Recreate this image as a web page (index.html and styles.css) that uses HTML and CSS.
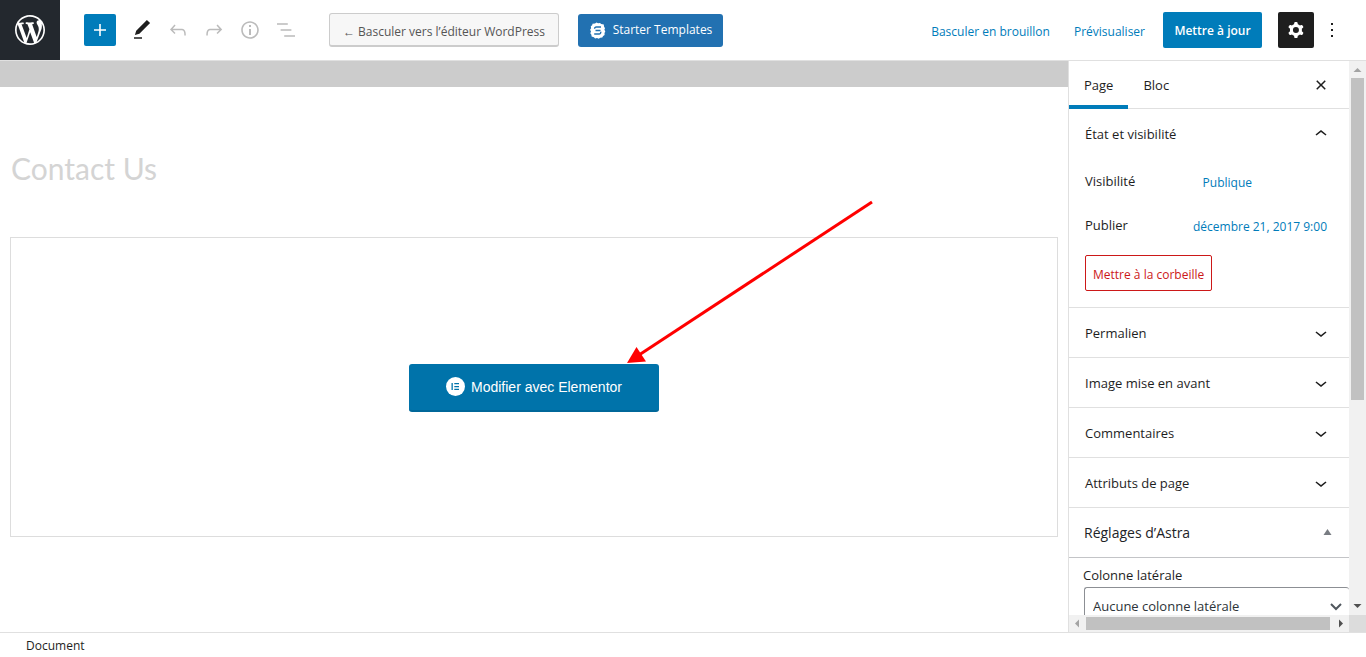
FILE: index.html
```html
<!DOCTYPE html>
<html lang="fr">
<head>
<meta charset="utf-8">
<meta name="viewport" content="width=device-width, initial-scale=1">
<title>Modifier la page</title>
<link rel="stylesheet" href="styles.css">
</head>
<body>
<div class="editor">
  <header class="topbar">
    <a class="logo" href="#" aria-label="WordPress">
      <svg width="36" height="36" viewBox="-2 -2 24 24"><path d="M20 10c0-5.51-4.49-10-10-10C4.48 0 0 4.49 0 10c0 5.52 4.48 10 10 10 5.51 0 10-4.48 10-10zM7.78 15.37L4.37 6.22c.55-.02 1.17-.08 1.17-.08.5-.06.44-1.13-.06-1.11 0 0-1.45.11-2.37.11-.18 0-.37 0-.58-.01C4.12 2.69 6.87 1.11 10 1.11c2.33 0 4.45.87 6.05 2.34-.68-.11-1.65.39-1.65 1.58 0 .74.45 1.36.9 2.1.35.61.55 1.36.55 2.46 0 1.49-1.4 5-1.4 5l-3.03-8.37c.54-.02.82-.17.82-.17.5-.05.44-1.25-.06-1.22 0 0-1.44.12-2.38.12-.87 0-2.33-.12-2.33-.12-.5-.03-.56 1.2-.06 1.22l.92.08 1.26 3.41zM17.41 10c.24-.64.74-1.87.43-4.25.7 1.29 1.05 2.71 1.05 4.25 0 3.29-1.73 6.24-4.4 7.78.97-2.59 1.94-5.2 2.92-7.78zM6.1 18.09C3.12 16.65 1.11 13.53 1.11 10c0-1.3.23-2.48.72-3.59C3.25 10.3 4.67 14.2 6.1 18.09zm4.03-6.63l2.58 6.98c-.86.29-1.76.45-2.71.45-.79 0-1.57-.11-2.29-.33.81-2.38 1.62-4.74 2.42-7.1z"/></svg>
    </a>
    <div class="tools">
      <button class="tool tool-add" aria-label="Ajouter un bloc"><svg width="24" height="24" viewBox="0 0 24 24"><path d="M18 11.2h-5.2V6h-1.6v5.2H6v1.6h5.2V18h1.6v-5.2H18z"/></svg></button>
      <button class="tool" aria-label="Outils"><svg width="24" height="24" viewBox="0 0 24 24"><path d="M20.1 5.1L16.9 2 6.2 12.7l-1.3 4.4 4.5-1.3L20.1 5.1zM4 20.8h8v-1.5H4v1.5z"/></svg></button>
      <button class="tool tool-off" aria-label="Annuler"><svg width="24" height="24" viewBox="0 0 24 24"><path d="M18.3 11.7c-.6-.6-1.4-.9-2.3-.9H6.7l2.9-3.3-1.1-1-4.5 5L8.5 16l1-1-2.7-2.7H16c.5 0 .9.2 1.3.5 1 1 1 3.4 1 4.5v.3h1.5v-.2c0-1.5 0-4.3-1.5-5.7z"/></svg></button>
      <button class="tool tool-off" aria-label="Rétablir"><svg width="24" height="24" viewBox="0 0 24 24"><path d="M15.6 6.5l-1.1 1 2.9 3.3H8c-.9 0-1.7.3-2.3.9-1.4 1.5-1.4 4.2-1.4 5.6v.2h1.5v-.3c0-1.1 0-3.5 1-4.5.3-.3.7-.5 1.3-.5h9.2L14.5 15l1.1 1.1 4.6-4.6-4.6-5z"/></svg></button>
      <button class="tool tool-off" aria-label="Détails"><svg width="24" height="24" viewBox="0 0 24 24"><path d="M12 3.2c-4.8 0-8.8 3.9-8.8 8.8 0 4.8 3.9 8.8 8.8 8.8 4.8 0 8.8-3.9 8.8-8.8 0-4.8-4-8.8-8.8-8.8zm0 16c-4 0-7.2-3.3-7.2-7.2C4.8 8 8 4.8 12 4.8s7.2 3.3 7.2 7.2c0 4-3.2 7.2-7.2 7.2zM11 17h2v-6h-2v6zm0-8h2V7h-2v2z"/></svg></button>
      <button class="tool tool-off" aria-label="Vue en liste"><svg width="24" height="24" viewBox="0 0 24 24"><path d="M13.8 5.2H3v1.5h10.8V5.2zm-3.6 12v1.5H21v-1.5H10.2zm7.2-6H6.6v1.5h10.8v-1.5z"/></svg></button>
    </div>
    <button class="btn-switch">← Basculer vers l’éditeur WordPress</button>
    <button class="btn-starter">
      <svg width="17" height="17" viewBox="0 0 17 17"><path class="badge" d="M3.500 1.800 6 1.500 7.500.5l1.600.8 1.900-.2 1.200 1 2.600.4.200 2 1 1.700-.6 1.600.9 1.700-.8 1.600.1 1.900-1.500 1-.8 1.600-2 .2-1.600 1-1.700-.7-1.900.3-1.200-1.200-2.300-.6-.2-1.900-1.100-1.500.7-1.700-.9-1.700 1-1.500-.3-2 1.400-1z"/><path class="mark" d="M12 5H7.300a1.700 1.700 0 0 0-1.700 1.800M6.500 8.500h5M11.700 9.800A1.700 1.700 0 0 1 10 12H5.200"/></svg>
      Starter Templates
    </button>
    <div class="actions">
      <button class="link-btn">Basculer en brouillon</button>
      <button class="link-btn">Prévisualiser</button>
      <button class="btn-update">Mettre à jour</button>
      <button class="btn-settings" aria-label="Réglages"><svg width="24" height="24" viewBox="0 0 24 24"><path fill-rule="evenodd" d="M10.289 4.836A1 1 0 0111.275 4h1.306a1 1 0 01.987.836l.244 1.466c.787.26 1.503.679 2.108 1.218l1.393-.522a1 1 0 011.216.437l.653 1.13a1 1 0 01-.23 1.273l-1.148.944a6.025 6.025 0 010 2.435l1.149.946a1 1 0 01.23 1.272l-.653 1.13a1 1 0 01-1.216.437l-1.394-.522c-.605.54-1.32.958-2.108 1.218l-.244 1.466a1 1 0 01-.987.836h-1.306a1 1 0 01-.986-.836l-.244-1.466a5.995 5.995 0 01-2.108-1.218l-1.394.522a1 1 0 01-1.217-.436l-.653-1.131a1 1 0 01.23-1.272l1.149-.946a6.026 6.026 0 010-2.435l-1.148-.944a1 1 0 01-.23-1.272l.653-1.131a1 1 0 011.217-.437l1.393.522a5.994 5.994 0 012.108-1.218l.244-1.466zM14.929 12a3 3 0 11-6 0 3 3 0 016 0z"/></svg></button>
      <button class="btn-more" aria-label="Options"><svg width="24" height="24" viewBox="0 0 24 24"><path d="M13 19h-2v-2h2v2zm0-6h-2v-2h2v2zm0-6h-2V5h2v2z"/></svg></button>
    </div>
  </header>

  <div class="workspace">
    <main class="canvas">
      <div class="notice-strip"></div>
      <h1 class="page-title">Contact Us</h1>
      <section class="builder">
        <div class="builder-action">
          <button class="btn-elementor">
            <svg width="19" height="19" viewBox="0 0 19 19"><circle cx="9.500" cy="9.500" r="9.500" fill="#fff"/><path fill="#0073aa" d="M5.500 6h1.300v7H5.500zM8.300 6H13v1.300H8.300zM8.300 8.900H13v1.300H8.300zM8.300 11.700H13V13H8.300z"/></svg>
            <span>Modifier avec Elementor</span>
          </button>
          <svg class="pointer" width="248" height="164" viewBox="0 0 248 164" aria-hidden="true"><path d="M245 2 12 155" stroke="#f00" stroke-width="3"/><path d="M0 163 9.500 147 19 161.500z" fill="#f00"/></svg>
        </div>
      </section>
    </main>

    <aside class="sidebar">
      <div class="sidebar-content">
        <nav class="tabs">
          <button class="tab tab-active">Page</button>
          <button class="tab">Bloc</button>
          <button class="tab-close" aria-label="Fermer les réglages"><svg width="24" height="24" viewBox="0 0 24 24"><path d="M12 13.06l3.712 3.713 1.061-1.06L13.061 12l3.712-3.712-1.06-1.06L12 10.938 8.288 7.227l-1.061 1.06L10.939 12l-3.712 3.712 1.060 1.061L12 13.061z"/></svg></button>
        </nav>
        <section class="panel">
          <button class="panel-head">État et visibilité<svg width="24" height="24" viewBox="0 0 24 24"><path d="M6.500 12.400L12 8l5.500 4.400-.9 1.200L12 10l-4.500 3.600-1-1.200z"/></svg></button>
          <div class="panel-body">
            <div class="row"><span class="row-label">Visibilité</span><button class="link-btn">Publique</button></div>
            <div class="row"><span class="row-label">Publier</span><button class="link-btn">décembre 21, 2017 9:00</button></div>
            <button class="btn-trash">Mettre à la corbeille</button>
          </div>
        </section>
        <section class="panel"><button class="panel-head">Permalien<svg width="24" height="24" viewBox="0 0 24 24"><path d="M17.500 11.600L12 16l-5.500-4.400.9-1.200L12 14l4.500-3.600 1 1.200z"/></svg></button></section>
        <section class="panel"><button class="panel-head">Image mise en avant<svg width="24" height="24" viewBox="0 0 24 24"><path d="M17.500 11.600L12 16l-5.500-4.400.9-1.200L12 14l4.500-3.600 1 1.200z"/></svg></button></section>
        <section class="panel"><button class="panel-head">Commentaires<svg width="24" height="24" viewBox="0 0 24 24"><path d="M17.500 11.600L12 16l-5.500-4.400.9-1.200L12 14l4.500-3.600 1 1.200z"/></svg></button></section>
        <section class="panel"><button class="panel-head">Attributs de page<svg width="24" height="24" viewBox="0 0 24 24"><path d="M17.500 11.600L12 16l-5.500-4.400.9-1.200L12 14l4.500-3.600 1 1.200z"/></svg></button></section>
        <section class="panel panel-astra"><button class="panel-head">Réglages d’Astra<svg width="12" height="12" viewBox="0 0 12 12"><path d="M6.500 2l4 6h-8z"/></svg></button></section>
        <div class="astra-body">
          <label class="field-label" for="layout">Colonne latérale</label>
          <div class="select-wrap">
            <select id="layout" class="select"><option>Aucune colonne latérale</option></select>
            <svg width="12" height="8" viewBox="0 0 12 8"><path d="M1 1l5 5 5-5" fill="none" stroke="#50575e" stroke-width="2"/></svg>
          </div>
        </div>
      </div>
      <div class="vbar" aria-hidden="true">
        <svg width="17" height="17" viewBox="0 0 17 17"><path d="M4.500 11h8l-4-4z" fill="#a3a3a3"/></svg>
        <div class="vtrack"><div class="vthumb"></div></div>
        <svg width="17" height="17" viewBox="0 0 17 17"><path d="M4.500 6h8l-4 4z" fill="#505050"/></svg>
      </div>
      <div class="hbar" aria-hidden="true">
        <svg width="17" height="17" viewBox="0 0 17 17"><path d="M10 4.500v8l-4-4z" fill="#a3a3a3"/></svg>
        <div class="htrack"><div class="hthumb"></div></div>
        <svg width="17" height="17" viewBox="0 0 17 17"><path d="M7 4.500v8l4-4z" fill="#505050"/></svg>
      </div>
      <div class="bar-corner"></div>
    </aside>
  </div>

  <footer class="breadcrumb"><span>Document</span></footer>
</div>
</body>
</html>
```

FILE: styles.css
```css
* { box-sizing: border-box; }

body {
  margin: 0;
  font: 13px/20px "Open Sans", "Noto Sans", sans-serif;
  color: #1e1e1e;
  background: #fff;
}

button, select {
  font: inherit;
  color: inherit;
  background: none;
  border: 0;
  margin: 0;
  padding: 0;
  white-space: nowrap;
}

svg { display: block; flex: none; fill: currentColor; }

.editor { display: flex; flex-direction: column; height: 100vh; overflow: hidden; }

/* Top bar */
.topbar { display: flex; align-items: center; flex: none; height: 61px; border-bottom: 1px solid #e0e0e0; }
.logo { display: flex; align-items: center; justify-content: center; flex: none; width: 60px; height: 60px; color: #fff; background: #23282e; }
.tools { display: flex; gap: 4px; margin-left: 24px; }
.tool { display: flex; align-items: center; justify-content: center; width: 32px; height: 32px; border-radius: 2px; }
.tool-add { color: #fff; background: #007cba; margin-right: 6px; }
.tool-off { color: #bbb; }

.btn-switch {
  width: 230px;
  height: 34px;
  margin-left: 27px;
  padding-top: 4px;
  color: #555;
  font-size: 12px;
  background: #f7f7f7;
  border: 1px solid #ccc;
  border-bottom-width: 2px;
  border-radius: 3px;
}
.btn-starter {
  display: flex;
  align-items: center;
  justify-content: center;
  gap: 7px;
  width: 145px;
  height: 33px;
  margin-left: 19px;
  color: #fff;
  font-size: 12px;
  font-weight: 500;
  background: #2271b1;
  border-radius: 3px;
}
.badge { fill: #fff; }
.mark { fill: none; stroke: #2271b1; stroke-width: 1.4; }

.actions { display: flex; align-items: center; margin-left: auto; padding-right: 22px; }
.link-btn { height: 36px; padding: 2px 6px 0; color: #007cba; font-size: 12px; }
.actions .link-btn { padding: 3px 12px 0; }
.btn-update { width: 99px; height: 36px; margin-left: 6px; padding-top: 2px; color: #fff; font-size: 12px; font-weight: 600; background: #007cba; border-radius: 2px; }
.btn-settings { display: flex; align-items: center; justify-content: center; width: 36px; height: 36px; margin-left: 16px; color: #fff; background: #1e1e1e; border-radius: 2px; }
.btn-more { margin-left: 6px; }

/* Content area */
.workspace { display: flex; flex: 1; min-height: 0; }
.canvas { flex: 1; min-width: 0; }
.notice-strip { height: 26px; background: #ccc; }
.page-title { margin: 61px 11px 49px; color: #d4d4d4; font: 400 30px/40px Lato, sans-serif; }
.builder { display: flex; align-items: center; justify-content: center; height: 300px; margin: 0 10px; padding-top: 2px; border: 1px solid #ddd; }
.builder-action { position: relative; }
.btn-elementor {
  display: flex;
  align-items: center;
  justify-content: center;
  gap: 6px;
  width: 250px;
  height: 48px;
  padding-bottom: 2px;
  color: #fff;
  font: 14px/20px "Liberation Sans", Arial, sans-serif;
  background: #0073aa;
  border-bottom: 2px solid #006799;
  border-radius: 3px;
}
.btn-elementor span { padding-top: 2px; }
.pointer { position: absolute; left: 218px; bottom: 100%; }

/* Settings sidebar */
.sidebar {
  display: grid;
  grid-template-columns: minmax(0, 1fr) 17px;
  grid-template-rows: minmax(0, 1fr) 17px;
  flex: none;
  width: 298px;
  border-left: 1px solid #e0e0e0;
}
.sidebar-content { overflow: hidden; }
.tabs { display: flex; align-items: stretch; height: 48px; padding-right: 16px; border-bottom: 1px solid #e0e0e0; }
.tab { height: 48px; padding: 3px 15px 0; border-bottom: 4px solid transparent; font-weight: 500; }
.tab-active { border-bottom-color: #007cba; }
.tab-close { display: flex; align-items: center; margin-left: auto; }
.panel { border-bottom: 1px solid #e0e0e0; }
.panel-head { display: flex; align-items: center; justify-content: space-between; width: 100%; height: 49px; padding: 0 16px; font-weight: 500; }
.panel-body { padding: 6px 16px 16px; }
.row { display: flex; align-items: center; margin-bottom: 8px; }
.row-label { flex: 0 1 45%; padding-bottom: 2px; }
.row .link-btn { flex: none; }
.btn-trash { height: 36px; margin-top: 3px; padding: 3px 7px 0; color: #cc1818; font-size: 12px; border: 1px solid #cc1818; border-radius: 2px; }
.panel-astra { border-color: #c3c4c7; color: #1d2327; }
.panel-astra .panel-head { padding-left: 15px; font-size: 14px; }
.panel-astra svg { color: #787c82; }
.astra-body { padding: 7px 0 0 14px; }
.field-label { display: block; font-weight: 500; }
.select-wrap { display: grid; align-items: center; margin: 2px 0 0 1px; }
.select { appearance: none; grid-area: 1 / 1; width: 100%; height: 40px; padding: 0 24px 2px 8px; color: #2c3338; border: 1px solid #8c8f94; border-right: 0; border-radius: 3px; }
.select-wrap svg { grid-area: 1 / 1; justify-self: end; margin-right: 7px; pointer-events: none; }

/* Scroll bars */
.vbar { display: flex; flex-direction: column; background: #f1f1f1; }
.vtrack { flex: 1; padding: 0 2px; }
.vthumb { height: 62%; background: #c1c1c1; }
.hbar { display: flex; align-items: center; background: #f1f1f1; }
.htrack { flex: 1; }
.hthumb { width: 99%; height: 13px; background: #c1c1c1; }
.bar-corner { background: #dcdcdc; }

.breadcrumb { flex: none; height: 25px; padding: 3px 26px 0; border-top: 1px solid #e0e0e0; font-size: 12px; }
```
